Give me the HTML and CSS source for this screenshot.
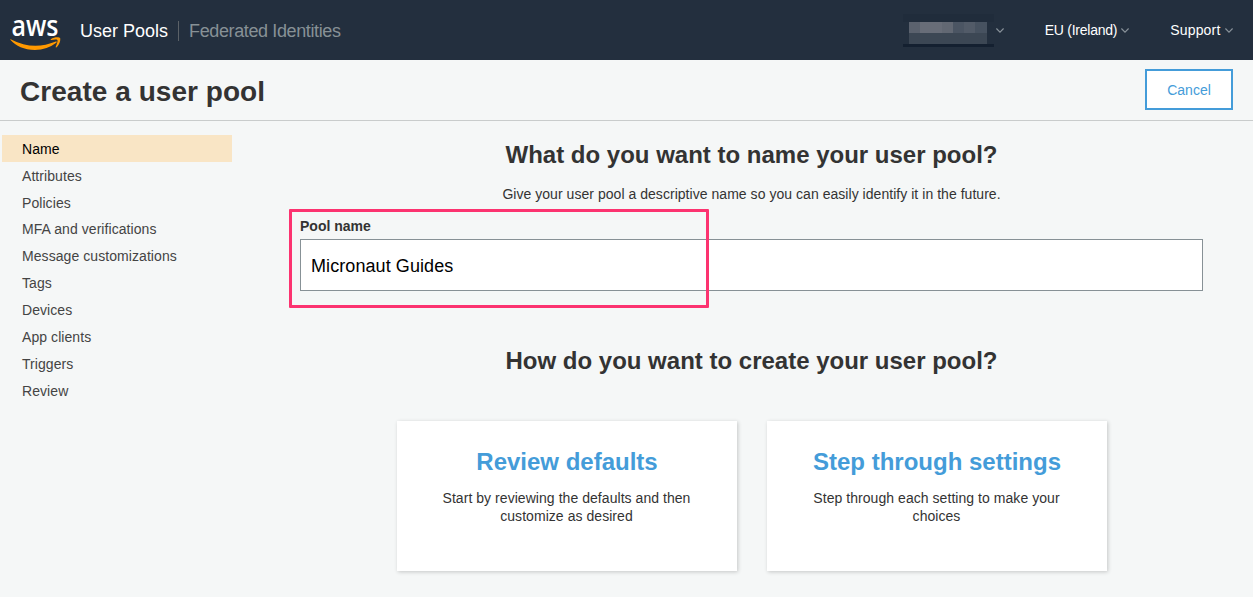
FILE: index.html
```html
<!DOCTYPE html>
<html lang="en">
<head>
<meta charset="utf-8">
<title>User Pools</title>
<link rel="stylesheet" href="styles.css">
</head>
<body>
<header class="topbar">
  <svg class="logo" width="52" height="50" viewBox="0 -14 52 50" role="img" aria-label="aws">
    <text class="logo-text" x="1.500" y="21" textLength="47" lengthAdjust="spacingAndGlyphs">aws</text>
    <path class="smile" d="M.3 24.8Q0 24 1.200 24.400Q23 36 45.800 26.500Q47.700 26 46.300 27.800Q37 34.900 25 35C14 35 6 31 .3 24.800Z"/>
    <path class="smile" d="M40.800 24.300C44 21.800 49.300 22 50.100 23C50.800 25 49.500 29.700 46.600 32.300Q45.500 32.800 45.700 31.800C47 28.500 48 26 47.400 25C46.600 24.100 43.500 24.600 41.300 24.900Q40 25 40.800 24.300Z"/>
  </svg>
  <nav class="services">
    <a class="service">User Pools</a>
    <a class="service service-muted">Federated Identities</a>
  </nav>
  <div class="account-menus">
    <div class="menu menu-account">
      <span class="redacted"><i class="r1"></i><i class="r2"></i><i class="r3"></i><i class="r4"></i></span>
      <svg class="chevron" width="8" height="5" viewBox="0 0 8 5"><path d="M.4.500 4 4.200 7.600.500"/></svg>
    </div>
    <div class="menu menu-region"><span class="menu-label">EU (Ireland)</span><svg class="chevron" width="8" height="5" viewBox="0 0 8 5"><path d="M.4.500 4 4.200 7.600.500"/></svg></div>
    <div class="menu menu-support"><span class="menu-label">Support</span><svg class="chevron" width="8" height="5" viewBox="0 0 8 5"><path d="M.4.500 4 4.200 7.600.500"/></svg></div>
  </div>
</header>
<div class="titlebar">
  <h1 class="title">Create a user pool</h1>
  <button class="cancel">Cancel</button>
</div>
<div class="layout">
  <nav class="steps">
    <a class="step step-active">Name</a>
    <a class="step">Attributes</a>
    <a class="step">Policies</a>
    <a class="step">MFA and verifications</a>
    <a class="step">Message customizations</a>
    <a class="step">Tags</a>
    <a class="step">Devices</a>
    <a class="step">App clients</a>
    <a class="step">Triggers</a>
    <a class="step">Review</a>
  </nav>
  <main class="content">
    <h2 class="question">What do you want to name your user pool?</h2>
    <p class="hint">Give your user pool a descriptive name so you can easily identify it in the future.</p>
    <div class="field">
      <label class="label" for="pool">Pool name</label>
      <input class="input" id="pool" type="text" value="Micronaut Guides">
      <div class="highlight"></div>
    </div>
    <h2 class="question question-second">How do you want to create your user pool?</h2>
    <div class="cards">
      <section class="card">
        <h3 class="card-title">Review defaults</h3>
        <p class="card-text">Start by reviewing the defaults and then customize as desired</p>
      </section>
      <section class="card">
        <h3 class="card-title">Step through settings</h3>
        <p class="card-text">Step through each setting to make your choices</p>
      </section>
    </div>
  </main>
</div>
</body>
</html>
```
FILE: styles.css
```css
* { box-sizing: border-box; }
body { margin: 0; height: 597px; overflow: hidden; background: #f5f7f7; color: #333; font: 14px/18px "Liberation Sans", Arial, sans-serif; }
h1, h2, h3, p { margin: 0; white-space: nowrap; }
.topbar { display: flex; align-items: center; height: 60px; padding: 0 20px 0 10px; background: #232f3e; color: #fff; }
.logo { flex: none; margin-top: -8px; overflow: visible; }
.logo-text { font: 600 28px "Open Sans", sans-serif; fill: #fff; }
.smile { fill: #f90; }
.services { display: flex; margin: 1px 0 0 18px; font-size: 18px; line-height: 20px; }
.service { white-space: nowrap; }
.service-muted { margin-left: 10px; padding-left: 10px; border-left: 1px solid #5b6167; color: #879196; letter-spacing: -.38px; }
.account-menus { display: flex; align-items: center; margin-left: auto; }
.menu { display: flex; align-items: center; gap: 4px; white-space: nowrap; }
.menu-account { gap: 2px; margin-top: 1px; }
.menu-region { margin-left: 40.5px; letter-spacing: -.25px; }
.menu-support { gap: 4.5px; margin-left: 41px; letter-spacing: .18px; }
.chevron { flex: none; fill: none; stroke: #8a939b; stroke-width: 1.1; }
.redacted { display: grid; flex: none; grid-template-rows: 8px 11px 11px 3px; width: 91px; }
.r1 { background: #202c3b; }
.r2 { margin: 0 7px 0 6px; background: linear-gradient(90deg, #5b626e 11px, #686d78 11px 33px, #626873 33px 44px, #4b5563 44px 55px, #525b68 55px 66px, #475260 66px); }
.r3 { margin: 0 7px 0 6px; background: #3c4754; }
.r4 { background: #142030; }
.titlebar { display: flex; align-items: center; justify-content: space-between; height: 61px; padding: 0 20px 2px; border-bottom: 1px solid #c9cccc; }
.title { padding-top: 5px; font-size: 28px; line-height: 34px; letter-spacing: .04px; }
.cancel { width: 88px; height: 41px; padding: 2px 0 0; border: 2px solid #449cd9; background: #fff; color: #449cd9; font: 14px "Liberation Sans", sans-serif; }
.layout { display: grid; grid-template-columns: 232px 903px; column-gap: 68px; padding-top: 14px; }
.steps { margin-top: -.25px; padding-left: 2px; }
.step { display: block; height: 26.890px; padding-left: 20px; line-height: 28px; color: #444; letter-spacing: .07px; }
.step-active { background: #f9e5c5; color: #000; }
.content { padding-top: 5px; }
.question { font-size: 24px; line-height: 30px; text-align: center; }
.hint { margin-top: 15px; text-align: center; letter-spacing: .04px; }
.field { position: relative; margin-top: 14px; }
.label { display: block; height: 22px; font-weight: bold; line-height: 18px; }
.input { display: block; width: 100%; height: 52px; padding: 2px 10px 0; border: 1px solid #879196; background: #fff; color: #000; font: 18px "Liberation Sans", sans-serif; letter-spacing: .08px; }
.highlight { position: absolute; left: -11px; top: -8px; width: 420px; height: 99px; border: 3px solid #fc3370; border-radius: 1px; }
.question-second { margin-top: 55px; }
.cards { display: flex; gap: 30px; margin: 45px 0 0 97px; }
.card { width: 340px; height: 150px; padding: 26px 45px; background: #fff; text-align: center; box-shadow: 1px 1px 4px rgba(0,0,0,.2); }
.card-title { color: #449cd9; font-size: 24px; line-height: 30px; }
.card-text { margin: 12px -9px 0 -10px; padding: 0 10px; white-space: normal; letter-spacing: .05px; }
```
